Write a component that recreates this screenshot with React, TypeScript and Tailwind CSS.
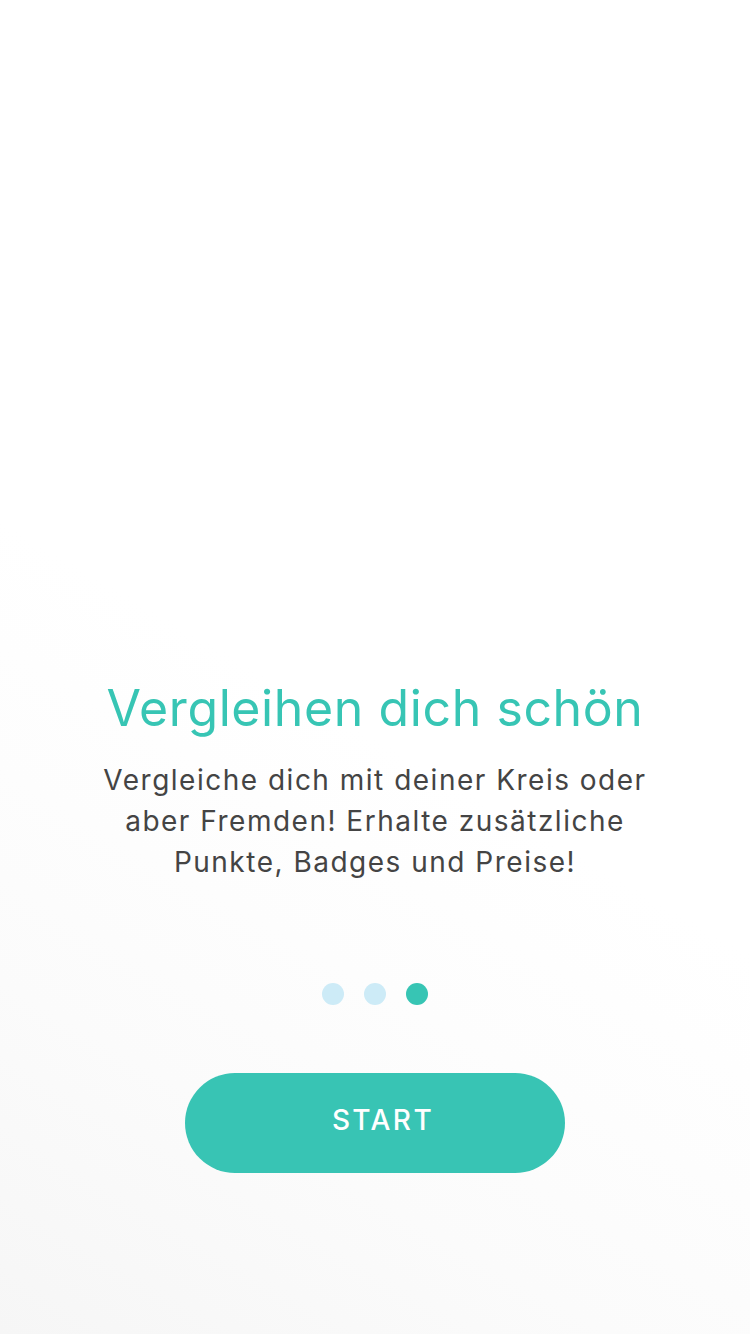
export default function App() {
  const dots = [false, false, true];

  return (
    <div
      className="w-[750px] h-[1334px] flex flex-col items-center bg-[linear-gradient(30deg,#f6f6f6_0%,#fbfbfb_20%,#fdfdfd_32%,#ffffff_46%)]"
      style={{ fontFamily: "Inter, 'Noto Sans', sans-serif" }}
    >
      <div className="pt-[676px] flex flex-col items-center">
        <h1 className="text-[50px] leading-[64px] text-[#37c5b4] font-normal tracking-[0.6px]">
          Vergleihen dich schön
        </h1>
        <p className="mt-[20px] text-center text-[28px] leading-[41px] text-[#444444] tracking-[1.5px]">
          Vergleiche dich mit deiner Kreis oder
          <br />
          aber Fremden! Erhalte zusätzliche
          <br />
          Punkte, Badges und Preise!
        </p>
      </div>

      <div className="mt-[100px] flex gap-[20px]">
        {dots.map((active, i) => (
          <span
            key={i}
            className={
              active
                ? "w-[22px] h-[22px] rounded-full bg-[#37c5b4]"
                : "w-[22px] h-[22px] rounded-full bg-[#cdebf7]"
            }
          />
        ))}
      </div>

      <button className="mt-[68px] w-[380px] h-[100px] rounded-full bg-[#38c4b4] text-white text-[28px] tracking-[2.4px] font-medium pl-[16px] pb-[6px]">
        START
      </button>
    </div>
  );
}
